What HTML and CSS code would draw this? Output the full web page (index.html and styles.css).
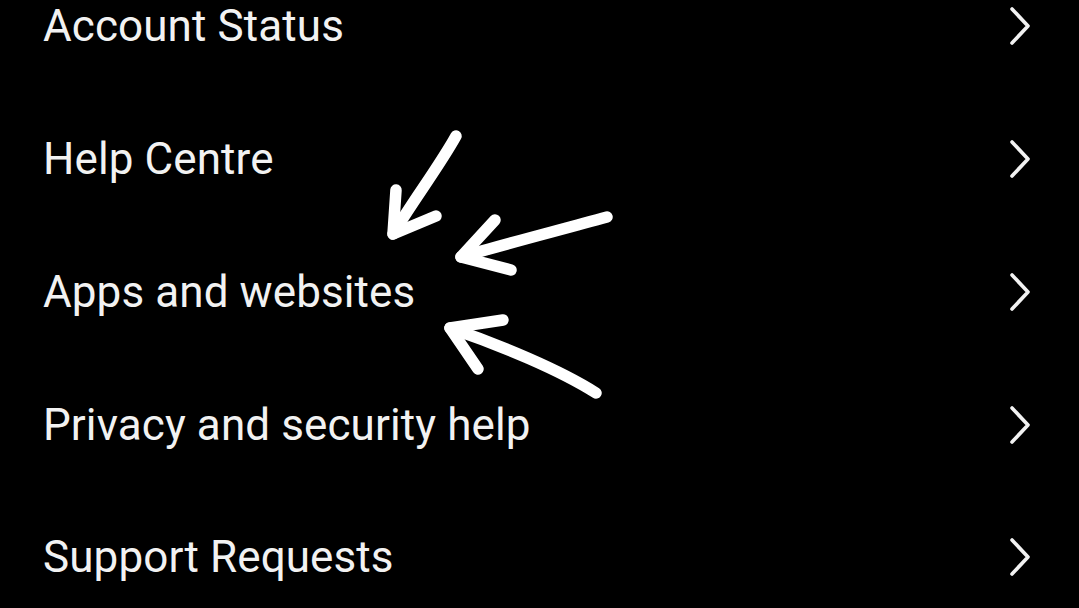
FILE: index.html
```html
<!DOCTYPE html>
<html>
<head>
<meta charset="utf-8">
<link rel="stylesheet" href="styles.css">
</head>
<body>
<div class="screen">
  <ul class="menu">
    <li class="item"><span class="label">Account Status</span><svg class="chev" viewBox="0 0 22 40"><path d="M3 3 L19 20 L3 37"/></svg></li>
    <li class="item"><span class="label">Help Centre</span><svg class="chev" viewBox="0 0 22 40"><path d="M3 3 L19 20 L3 37"/></svg></li>
    <li class="item"><span class="label">Apps and websites</span><svg class="chev" viewBox="0 0 22 40"><path d="M3 3 L19 20 L3 37"/></svg></li>
    <li class="item"><span class="label">Privacy and security help</span><svg class="chev" viewBox="0 0 22 40"><path d="M3 3 L19 20 L3 37"/></svg></li>
    <li class="item"><span class="label">Support Requests</span><svg class="chev" viewBox="0 0 22 40"><path d="M3 3 L19 20 L3 37"/></svg></li>
  </ul>
  <svg class="annot" viewBox="0 0 1079 608">
    <path d="M456 136 C440 165, 415 198, 393 234"/>
    <path d="M396 190 L393 234 L436 216"/>
    <path d="M607 217 C560 230, 505 244, 461 257"/>
    <path d="M495 220 L461 257 L511 270"/>
    <path d="M596 393 C560 370, 500 345, 450 328"/>
    <path d="M503 320 L450 328 L478 369"/>
  </svg>
</div>
</body>
</html>
```

FILE: styles.css
```css
html, body {
  margin: 0;
  padding: 0;
  background: #000;
}
.screen {
  position: relative;
  width: 1079px;
  height: 608px;
  overflow: hidden;
  background: #000;
  font-family: Roboto, "Noto Sans", sans-serif;
  color: #f2f2f2;
}
.menu {
  list-style: none;
  margin: -40px 0 0 0;
  padding: 0 48px 0 43px;
  display: flex;
  flex-direction: column;
}
.item {
  height: 132.75px;
  display: flex;
  align-items: center;
  justify-content: space-between;
}
.label {
  font-size: 44px;
  line-height: 1;
  letter-spacing: 0.1px;
}
.chev {
  width: 22px;
  height: 40px;
  fill: none;
  stroke: #f2f2f2;
  stroke-width: 3.6;
  stroke-linecap: round;
  stroke-linejoin: round;
}
.annot {
  position: absolute;
  left: 0;
  top: 0;
  width: 1079px;
  height: 608px;
  fill: none;
  stroke: #fff;
  stroke-width: 11.5;
  stroke-linecap: round;
  stroke-linejoin: round;
}
```
